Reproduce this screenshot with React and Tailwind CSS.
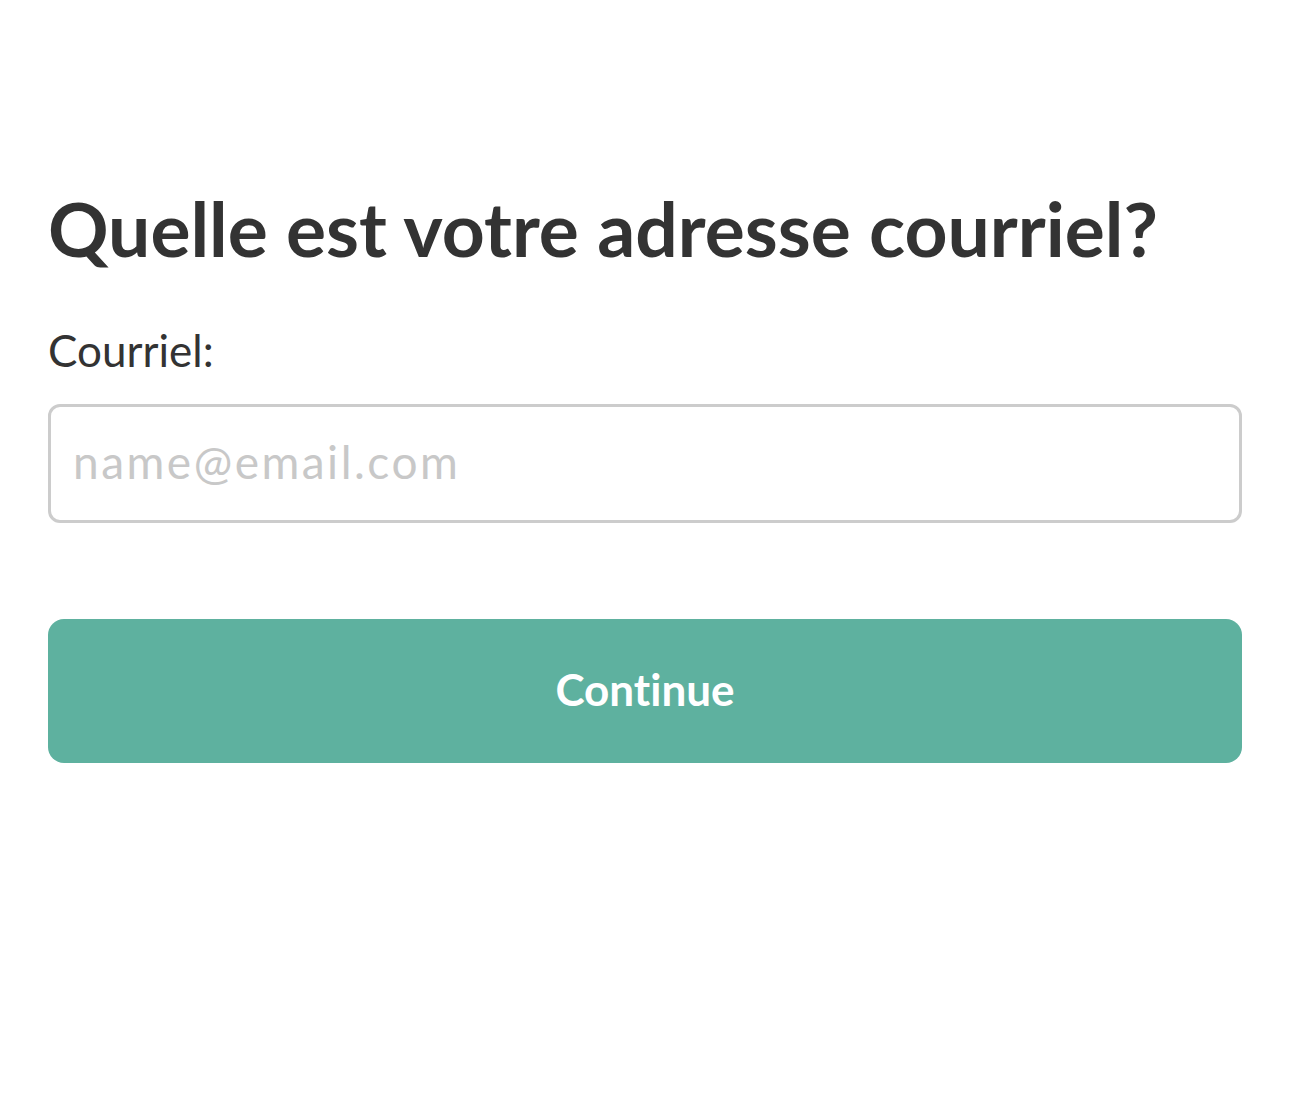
export default function App() {
  return (
    <div className="min-h-[1098px] w-full bg-white px-[48px] pt-[178px] [font-variant-ligatures:none]" style={{ fontFamily: '"Lato", "Noto Sans", sans-serif' }}>
      <h1 className="text-[75px] leading-[100px] font-bold text-[#333333]">Quelle est votre adresse courriel?</h1>
      <label className="block mt-[44px] text-[44px] leading-[56px] text-[#333333]">Courriel:</label>
      <div className="mt-[26px] h-[119px] rounded-[12px] border-[3px] border-[#cccccc] flex items-center px-[22px] pb-[5px]">
        <input
          type="email"
          placeholder="name@email.com"
          className="w-full bg-transparent outline-none text-[46px] text-[#333333] placeholder:text-[#c8c8c8] tracking-[2.5px]"
          style={{ fontFamily: '"Lato", "Noto Sans", sans-serif' }}
        />
      </div>
      <button className="mt-[96px] w-full h-[144px] rounded-[16px] bg-[#5eb19f] text-white text-[44px] font-bold pb-[4px] [font-variant-ligatures:none]" style={{ fontFamily: '"Lato", "Noto Sans", sans-serif' }}>
        Continue
      </button>
    </div>
  );
}
